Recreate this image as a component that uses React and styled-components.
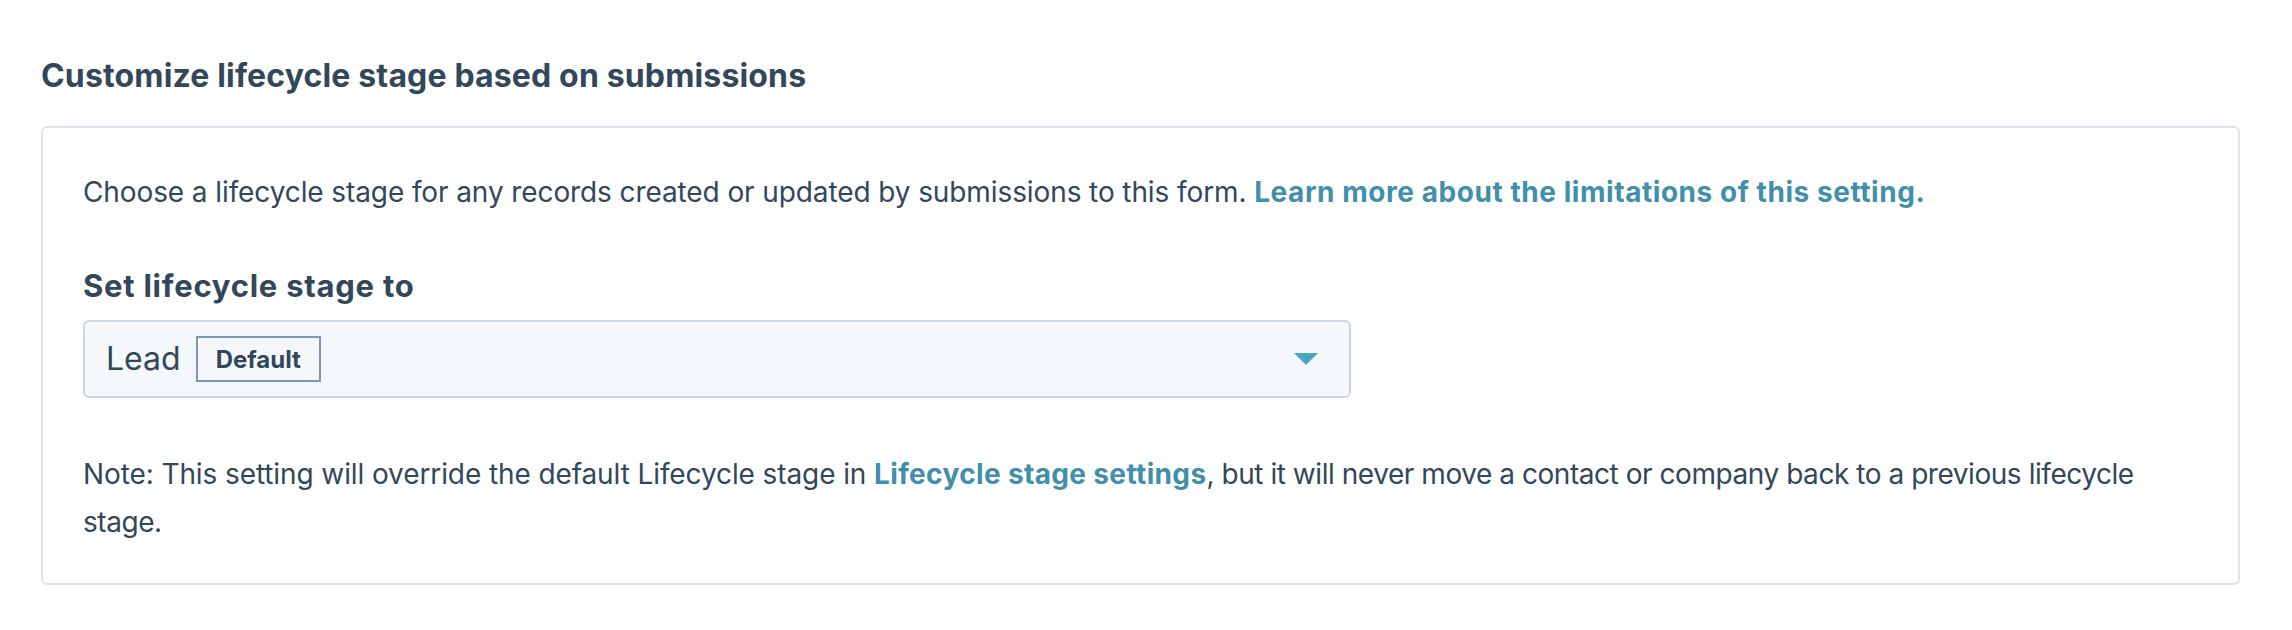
import React from "react";
import styled, { createGlobalStyle } from "styled-components";

const GlobalStyle = createGlobalStyle`
  body {
    margin: 0;
    background: #ffffff;
    font-family: "Inter", "Lato", sans-serif;
    color: #33475b;
  }
`;

const Page = styled.div`
  padding: 52px 52px 44px 41px;
`;

const Heading = styled.h5`
  margin: 0 0 26px;
  font-size: 32px;
  line-height: 48px;
  font-weight: 700;
  letter-spacing: 0.15px;
  color: #33475b;
`;

const Card = styled.section`
  border: 2px solid #dfe3eb;
  border-radius: 6px;
  padding: 40px 40px 37px;
`;

const Paragraph = styled.p`
  margin: 0;
  font-size: 28px;
  line-height: 48px;
  letter-spacing: -0.1px;
  color: #33475b;
`;

const Link = styled.a`
  color: #418fab;
  font-weight: 700;
  letter-spacing: 0.55px;
  text-decoration: none;
  cursor: pointer;
`;

const Label = styled.div`
  margin-top: 50px;
  font-size: 31px;
  line-height: 40px;
  font-weight: 700;
  letter-spacing: 0.75px;
  color: #33475b;
`;

const Select = styled.div`
  margin-top: 14px;
  width: 1268px;
  height: 78px;
  box-sizing: border-box;
  display: flex;
  align-items: center;
  gap: 15px;
  padding: 0 31px 0 21px;
  background: #f5f8fa;
  border: 2px solid #cbd6e2;
  border-radius: 6px;
  cursor: pointer;
`;

const Value = styled.span`
  font-size: 32px;
  line-height: 40px;
  color: #33475b;
`;

const Badge = styled.span`
  display: inline-flex;
  align-items: center;
  height: 46px;
  box-sizing: border-box;
  padding: 0 18px;
  border: 2px solid #7c98b6;
  font-size: 24px;
  font-weight: 700;
  color: #33475b;
`;

const Caret = styled.svg`
  margin-left: auto;
  width: 24px;
  height: 12px;
  fill: #4ba5bc;
`;

const Note = styled(Paragraph)`
  margin-top: 52px;

  ${Link} {
    letter-spacing: 0.35px;
  }
`;

/* the sentence after the link runs a little wider in this font */
const Tail = styled.span`
  letter-spacing: -0.45px;
`;

export default function App() {
  return (
    <>
      <GlobalStyle />
      <Page>
        <Heading>Customize lifecycle stage based on submissions</Heading>
        <Card>
          <Paragraph>
            Choose a lifecycle stage for any records created or updated by submissions to this form.{" "}
            <Link>Learn more about the limitations of this setting.</Link>
          </Paragraph>
          <Label>Set lifecycle stage to</Label>
          <Select>
            <Value>Lead</Value>
            <Badge>Default</Badge>
            <Caret viewBox="0 0 24 12">
              <path d="M0 0 H24 L12 12 Z" />
            </Caret>
          </Select>
          <Note>
            Note: This setting will override the default Lifecycle stage in{" "}
            <Link>Lifecycle stage settings</Link>
            <Tail>, but it will never move a contact or company back to a previous lifecycle stage.</Tail>
          </Note>
        </Card>
      </Page>
    </>
  );
}
